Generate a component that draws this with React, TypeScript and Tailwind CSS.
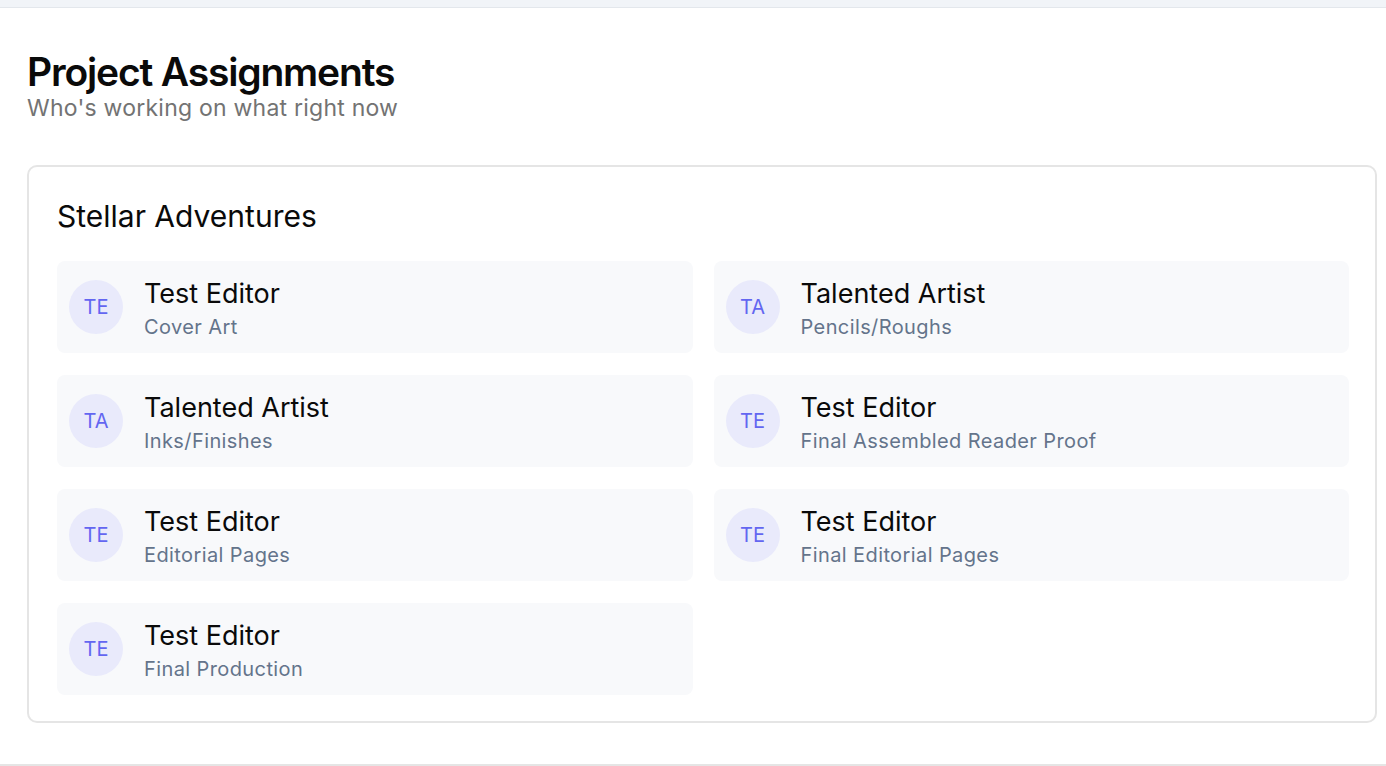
import React from 'react';

type Assignment = {
  name: string;
  role: string;
};

const assignments: Assignment[] = [
  { name: 'Test Editor', role: 'Cover Art' },
  { name: 'Talented Artist', role: 'Pencils/Roughs' },
  { name: 'Talented Artist', role: 'Inks/Finishes' },
  { name: 'Test Editor', role: 'Final Assembled Reader Proof' },
  { name: 'Test Editor', role: 'Editorial Pages' },
  { name: 'Test Editor', role: 'Final Editorial Pages' },
  { name: 'Test Editor', role: 'Final Production' },
];

const initials = (name: string) =>
  name
    .split(' ')
    .map((p) => p[0])
    .join('')
    .toUpperCase();

export default function App() {
  return (
    <div className="min-h-[766px] bg-white font-['Inter','Liberation_Sans',sans-serif] flex flex-col">
      <div className="h-2 bg-[#f1f4f8] border-b border-[#e3e7ec]" />

      <main className="flex-1 pl-[27px] pr-[9px] pt-[42px] pb-[41px]">
        <h1 className="text-[39px] leading-[44px] font-semibold tracking-[-0.03em] text-[#0a0a0a]">
          Project Assignments
        </h1>
        <p className="text-[23px] leading-[28px] text-[#737373] tracking-[0.01em]">Who's working on what right now</p>

        <section className="mt-[43px] border-2 border-[#e5e5e5] rounded-[10px] pl-7 pr-[26px] pt-[31px] pb-[26px]">
          <h2 className="text-[30px] leading-[36px] text-[#0a0a0a] mb-[27px]">Stellar Adventures</h2>

          <div className="grid grid-cols-2 gap-x-[21px] gap-y-[22px]">
            {assignments.map((a, i) => (
              <div key={i} className="flex items-center gap-[21px] bg-[#f8f9fb] rounded-lg px-3 h-[92px]">
                <div className="w-[54px] h-[54px] shrink-0 rounded-full bg-[#e9eafb] text-[#6366f1] text-[20px] flex items-center justify-center">
                  {initials(a.name)}
                </div>
                <div className="pt-[2px]">
                  <div className="text-[27px] leading-[38px] text-[#0a0a0a]">{a.name}</div>
                  <div className="text-[20px] leading-[28px] text-[#64748b] tracking-[0.02em]">{a.role}</div>
                </div>
              </div>
            ))}
          </div>
        </section>
      </main>

      <div className="h-[2px] bg-[#e5e5e5]" />
    </div>
  );
}
